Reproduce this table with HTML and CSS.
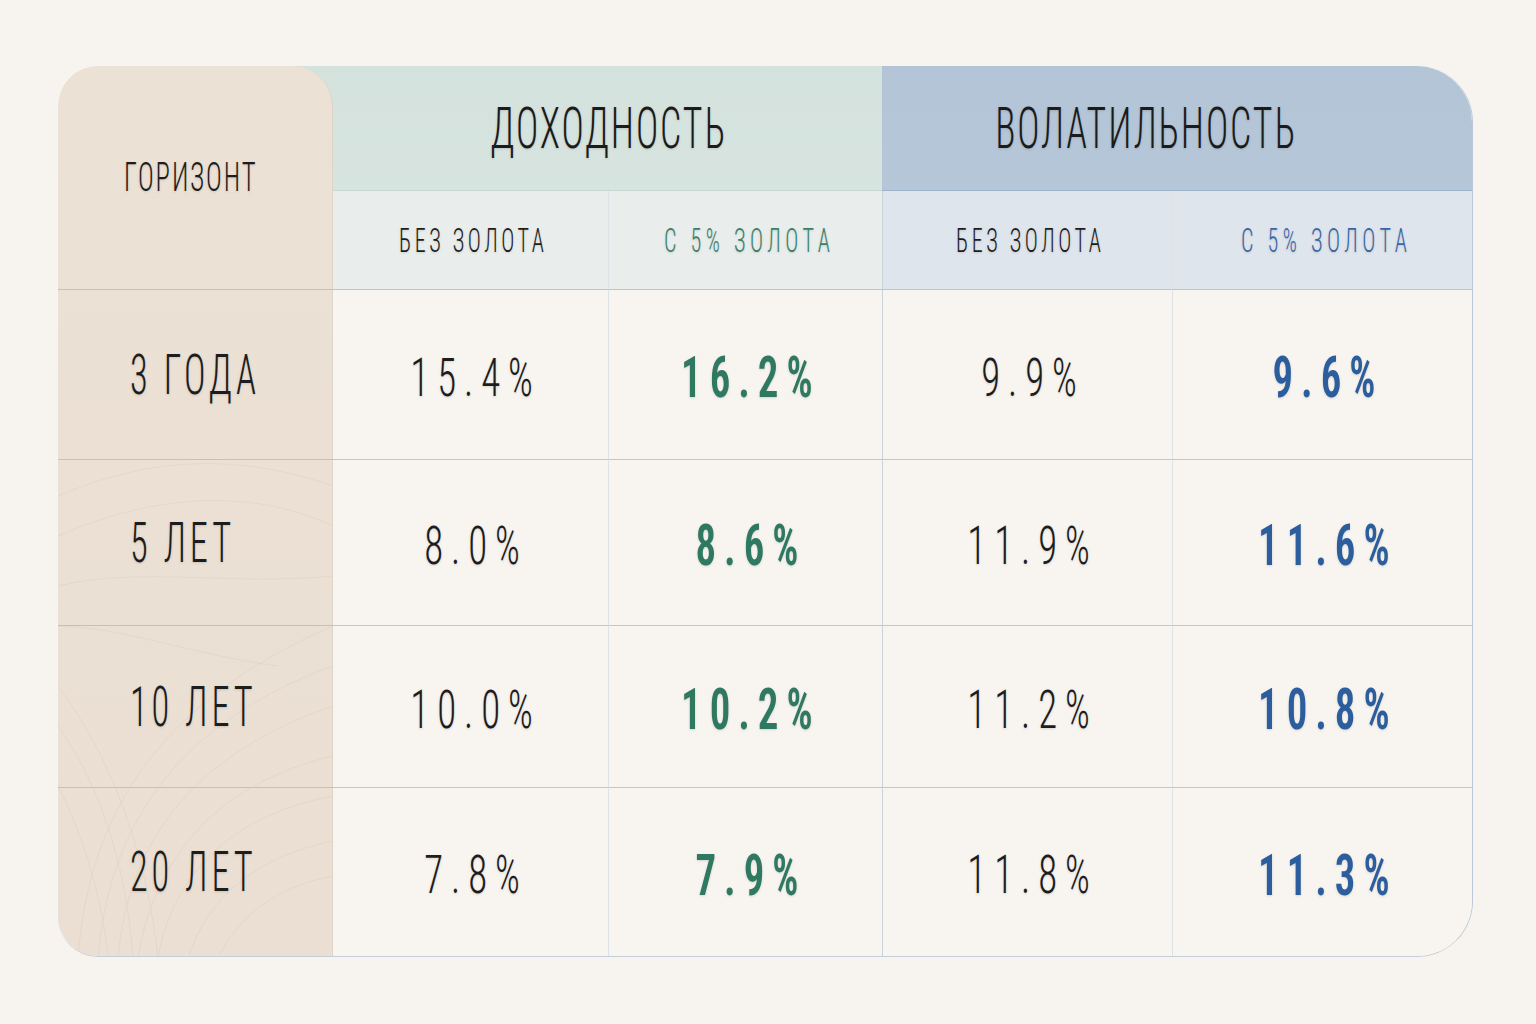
FILE: index.html
```html
<!DOCTYPE html>
<html lang="ru">
<head>
<meta charset="utf-8">
<title>Доходность и волатильность</title>
<link rel="stylesheet" href="styles.css">
</head>
<body>
<main class="page">
  <div class="table">
    <div class="hcol"></div>
    <div class="corner"><span class="t lbl">ГОРИЗОНТ</span></div>
    <div class="grp ret"><span class="t grp-t">ДОХОДНОСТЬ</span></div>
    <div class="grp vol"><span class="t grp-t">ВОЛАТИЛЬНОСТЬ</span></div>

    <div class="sub sub-ret"><span class="t sub-t">БЕЗ ЗОЛОТА</span></div>
    <div class="sub sub-ret sep-mid"><span class="t sub-t green">С 5% ЗОЛОТА</span></div>
    <div class="sub sub-vol sep-grp"><span class="t sub-t">БЕЗ ЗОЛОТА</span></div>
    <div class="sub sub-vol sep-mid"><span class="t sub-t blue">С 5% ЗОЛОТА</span></div>

    <div class="row-label r3"><span class="t rl">3 ГОДА</span></div>
    <div class="cell r3"><span class="t val">15.4%</span></div>
    <div class="cell r3 sep-mid"><span class="t val bold green">16.2%</span></div>
    <div class="cell r3 sep-grp"><span class="t val">9.9%</span></div>
    <div class="cell r3 sep-mid"><span class="t val bold blue">9.6%</span></div>

    <div class="row-label r4"><span class="t rl">5 ЛЕТ</span></div>
    <div class="cell r4"><span class="t val">8.0%</span></div>
    <div class="cell r4 sep-mid"><span class="t val bold green">8.6%</span></div>
    <div class="cell r4 sep-grp"><span class="t val">11.9%</span></div>
    <div class="cell r4 sep-mid"><span class="t val bold blue">11.6%</span></div>

    <div class="row-label r5"><span class="t rl">10 ЛЕТ</span></div>
    <div class="cell r5"><span class="t val">10.0%</span></div>
    <div class="cell r5 sep-mid"><span class="t val bold green">10.2%</span></div>
    <div class="cell r5 sep-grp"><span class="t val">11.2%</span></div>
    <div class="cell r5 sep-mid"><span class="t val bold blue">10.8%</span></div>

    <div class="row-label r6 last"><span class="t rl">20 ЛЕТ</span></div>
    <div class="cell r6 last"><span class="t val">7.8%</span></div>
    <div class="cell r6 last sep-mid"><span class="t val bold green">7.9%</span></div>
    <div class="cell r6 last sep-grp"><span class="t val">11.8%</span></div>
    <div class="cell r6 last sep-mid"><span class="t val bold blue">11.3%</span></div>
  </div>
</main>
</body>
</html>
```
FILE: styles.css
```css
html, body {
  margin: 0;
  padding: 0;
  background: #f7f4ef;
}

body {
  font-family: "Roboto Condensed", "Roboto", "Liberation Sans", sans-serif;
  color: #1d1d1d;
}

.page {
  padding: 66px 0 0 58px;
}

.table {
  display: grid;
  grid-template-columns: 275px 275px 274px 290px 300px;
  grid-template-rows: 125px 99px 170px 166px 162px 168px;
  width: 1414px;
  border-radius: 40px 56px 56px 40px;
  border-right: 1px solid #b9c9d9;
  border-bottom: 1px solid #c3cfdb;
  overflow: hidden;
  background: #f8f5f0;
}

/* beige horizon column */
.hcol {
  grid-column: 1;
  grid-row: 1 / 7;
  z-index: 1;
  background-color: #ebe0d4;
  border-radius: 40px 40px 0 40px;
  border-right: 1px solid #ddd3c7;
  background-image:
    url("data:image/svg+xml,%3Csvg xmlns='http://www.w3.org/2000/svg' width='275' height='892' viewBox='0 0 275 892'%3E%3Cg fill='none' stroke='%23dccdbd' stroke-width='0.6' opacity='0.7'%3E%3Cpath d='M0 430 C70 400 160 380 275 420'/%3E%3Cpath d='M0 470 C90 430 190 420 275 460'/%3E%3Cpath d='M20 892 C30 760 90 640 275 560'/%3E%3Cpath d='M40 892 C50 770 110 660 275 600'/%3E%3Cpath d='M60 892 C70 780 130 690 275 640'/%3E%3Cpath d='M80 892 C95 800 150 720 275 690'/%3E%3Cpath d='M100 892 C115 810 170 750 275 730'/%3E%3Cpath d='M0 620 C60 700 90 800 100 892'/%3E%3Cpath d='M0 660 C50 730 70 820 75 892'/%3E%3Cpath d='M0 720 C30 780 45 840 50 892'/%3E%3Cpath d='M130 892 C150 830 200 790 275 775'/%3E%3Cpath d='M160 892 C180 850 220 820 275 810'/%3E%3Cpath d='M0 520 C80 500 170 520 275 510'/%3E%3Cpath d='M0 560 C60 560 140 590 220 600'/%3E%3C/g%3E%3C/svg%3E"),
    linear-gradient(180deg, #ece1d5 0%, #eadfd2 100%);
  background-repeat: no-repeat;
}

.corner {
  grid-column: 1;
  grid-row: 1 / 3;
  z-index: 2;
  display: flex;
  align-items: center;
  justify-content: center;
  padding-right: 12px;
  border-bottom: 1px solid #b3c4d5;
}

.row-label {
  grid-column: 1;
  z-index: 2;
  display: flex;
  align-items: center;
  justify-content: flex-start;
  padding-left: 72px;
  border-bottom: 1px solid #b3c4d5;
}

.r3 { grid-row: 3; }
.r4 { grid-row: 4; }
.r5 { grid-row: 5; }
.r6 { grid-row: 6; }

.grp {
  grid-row: 1;
  display: flex;
  align-items: center;
  justify-content: center;
}

.ret {
  grid-column: 2 / 4;
  margin-left: -50px;
  padding-left: 50px;
  background: linear-gradient(180deg, #d4e2de 0%, #d7e4e0 100%);
  border-bottom: 1px solid #c6d8d6;
}

.vol {
  grid-column: 4 / 6;
  padding-right: 64px;
  background: linear-gradient(180deg, #b2c4d6 0%, #b5c7d8 100%);
  border-bottom: 1px solid #9db3ca;
  border-top-right-radius: 56px;
}

.sub {
  grid-row: 2;
  display: flex;
  align-items: center;
  justify-content: center;
  border-bottom: 1px solid #b6c6d6;
}

.sub-ret { background: #e9eeec; }
.sub-vol { background: #dfe5ec; }

.cell {
  display: flex;
  align-items: center;
  justify-content: center;
  border-bottom: 1px solid #b9c8d7;
  background: #f8f5f1;
}

.last { border-bottom: none; }

.sep-mid { border-left: 1px solid #dde2e6; }
.sep-grp { border-left: 1px solid #c8d3de; }

/* condensed type */
.t {
  display: inline-block;
  line-height: 1;
  white-space: nowrap;
  transform: scaleX(0.65);
  transform-origin: center;
  font-weight: 300;
  text-shadow: 0 1px 3px rgba(70, 60, 50, 0.18);
}

.grp-t {
  font-size: 58px;
  letter-spacing: 3px;
  margin-right: -3px;
  color: #1b1b1b;
}

.lbl {
  font-size: 41px;
  letter-spacing: 3px;
  margin-right: -3px;
}

.sub-t {
  font-size: 34px;
  letter-spacing: 5.5px;
  margin-right: -5.5px;
}

.sub-t.green,
.sub-t.blue {
  letter-spacing: 7px;
  margin-right: -7px;
}

.rl {
  font-size: 56px;
  letter-spacing: 6px;
  transform-origin: left center;
}

.val {
  font-size: 54px;
  letter-spacing: 11px;
  margin-right: -11px;
  transform: scaleX(0.72);
  margin-top: 6px;
}

.val.bold {
  font-size: 57px;
  font-weight: 600;
  letter-spacing: 11px;
  margin-right: -11px;
}

.green { color: #2f7862; }
.blue { color: #2c5e9d; }
.sub-t.green { color: #3b8069; }
.sub-t.blue { color: #3866a6; }
```
